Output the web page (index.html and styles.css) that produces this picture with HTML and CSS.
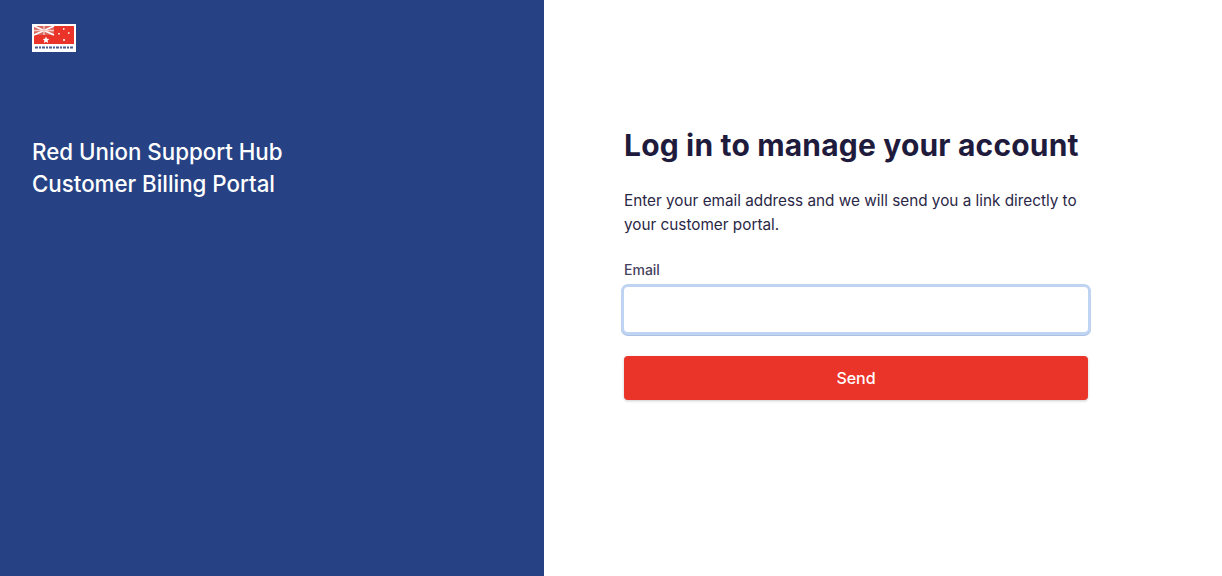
FILE: index.html
```html
<!DOCTYPE html>
<html lang="en">
<head>
    <meta charset="UTF-8">
    <meta name="viewport" content="width=device-width, initial-scale=1.0">
    <title>Customer Billing Portal</title>
    <link rel="stylesheet" href="styles.css">
</head>
<body>
<div class="container">
    <div class="sidebar">
        <svg class="logo" width="44" height="28" viewBox="0 0 44 28" role="img" aria-label="Red Union logo">
            <rect width="44" height="28" fill="#ffffff"/>
            <rect x="2" y="2" width="40" height="18" fill="#ea3329"/>
            <!-- union jack corner -->
            <rect x="2" y="2" width="20" height="9" fill="#d9675f"/>
            <path d="M2 2L22 11M22 2L2 11" stroke="#ffffff" stroke-width="1.6"/>
            <path d="M12 2V11M2 6.5H22" stroke="#f6c9c4" stroke-width="1.4"/>
            <!-- stars -->
            <path d="M14 12.500l1 2.200 2.300.3-1.700 1.600.5 2.300-2.100-1.200-2.100 1.200.5-2.300-1.700-1.600 2.300-.3z" fill="#ffffff"/>
            <rect x="31" y="4" width="1.500" height="2" fill="#f8d0cc"/>
            <rect x="26" y="9" width="2" height="1.500" fill="#f8d0cc"/>
            <rect x="36" y="8" width="1.500" height="2" fill="#f8d0cc"/>
            <rect x="31" y="15" width="2" height="2" fill="#f8d0cc"/>
            <!-- small print under the flag -->
            <path d="M3 23.500H41" stroke="#4a5c90" stroke-width="2" stroke-dasharray="3 1 2 1"/>
        </svg>
        <h2 class="portal-title">Red Union Support Hub<br>Customer Billing Portal</h2>
    </div>
    <div class="main-content">
        <form class="login-form">
            <h1>Log in to manage your account</h1>
            <p>Enter your email address and we will send you a link directly to your customer portal.</p>
            <label for="email">Email</label>
            <input id="email" class="email-input" type="email">
            <button class="send-button" type="button">Send</button>
        </form>
    </div>
</div>
</body>
</html>
```

FILE: styles.css
```css
body {
    font-family: 'Inter', sans-serif;
    background-color: #ffffff;
    color: #1f1b3d;
    margin: 0;
}
.container {
    display: flex;
    height: 576px;
    overflow: hidden;
}
.sidebar {
    background-color: #264284;
    color: white;
    box-sizing: border-box;
    flex: 0 0 544px;
    padding: 24px 32px;
}
.logo {
    display: block;
}
.portal-title {
    font-size: 22.3px;
    font-weight: 500;
    line-height: 32px;
    margin: 84px 0 0;
}
.main-content {
    flex-grow: 1;
    padding: 126px 0 0 80px;
}
.login-form {
    display: flex;
    flex-direction: column;
    width: 464px;
}
.login-form h1 {
    font-size: 30px;
    font-weight: 700;
    letter-spacing: 0.17px;
    line-height: 38px;
    margin: 0 0 25px;
}
.login-form p {
    color: #2a2746;
    font-size: 15.3px;
    line-height: 24px;
    margin: 0 0 23px;
}
.login-form label {
    color: #45425f;
    font-size: 14px;
    font-weight: 500;
    line-height: 20px;
    margin-bottom: 7px;
}
.email-input {
    background: #ffffff;
    border: none;
    border-radius: 4px;
    box-shadow: 0 0 0 3px #bfd4f2, 0 1px 0 3px #adc2e2;
    box-sizing: border-box;
    height: 45px;
    margin-bottom: 24px;
    outline: none;
}
.send-button {
    background-color: #ea3329;
    border: none;
    border-radius: 4px;
    box-shadow: 0 1px 3px rgba(0,0,0,0.2);
    color: white;
    cursor: pointer;
    font-family: inherit;
    font-size: 16px;
    font-weight: 500;
    height: 44px;
}
```
